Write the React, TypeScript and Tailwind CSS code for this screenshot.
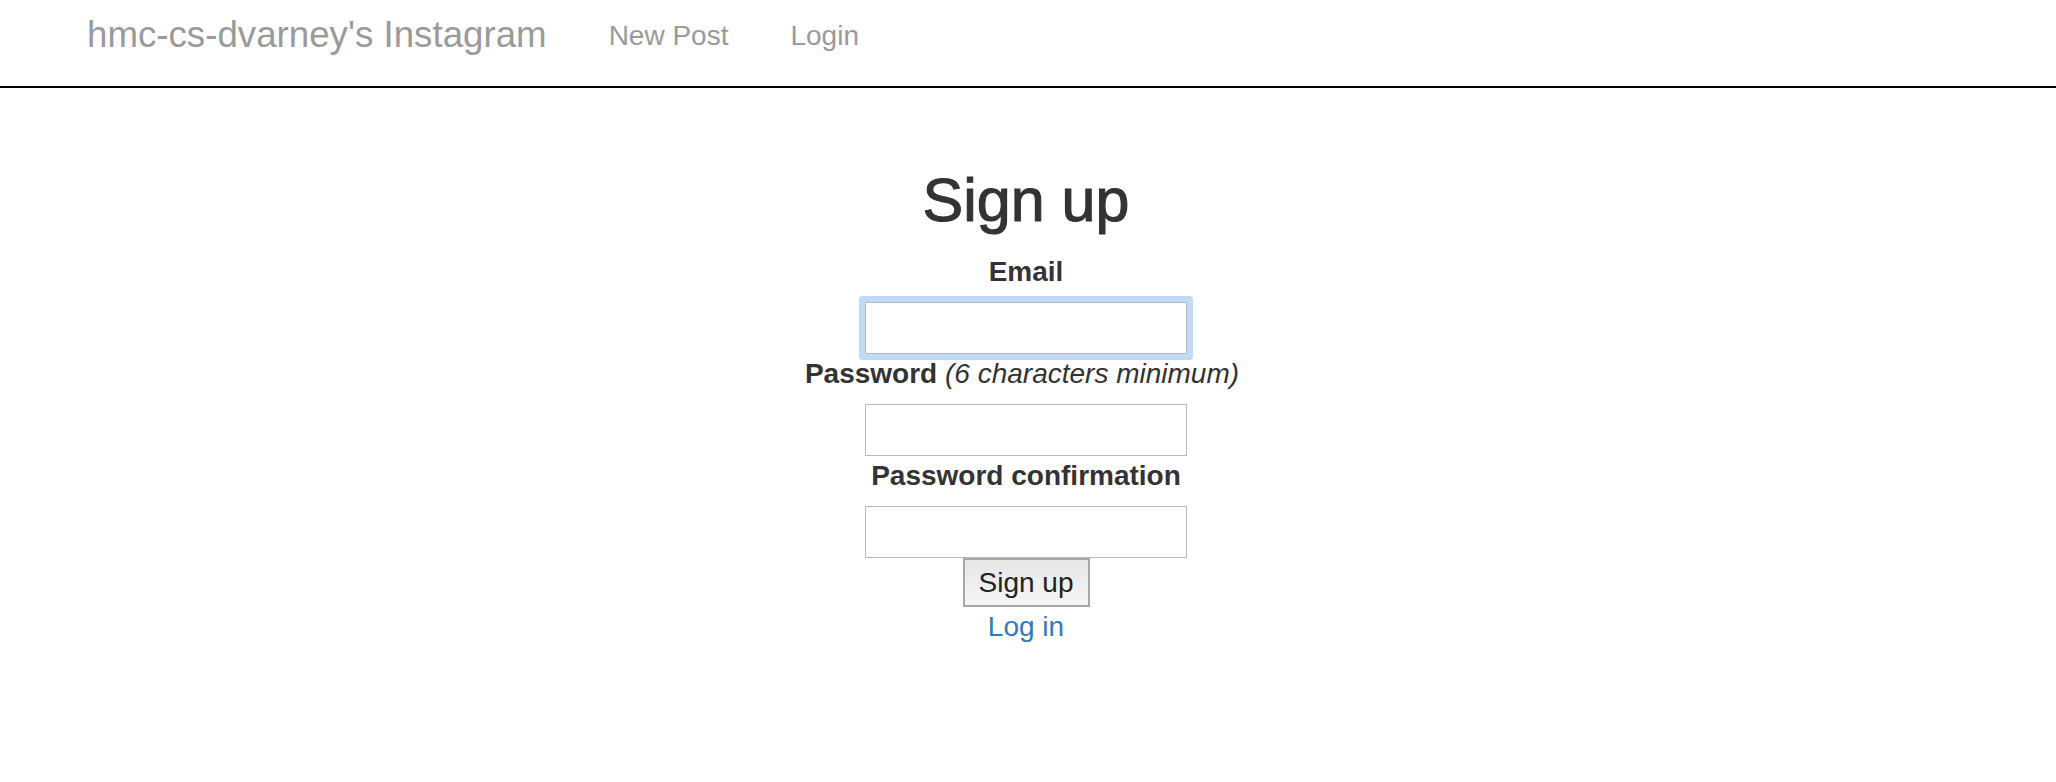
import React from "react";

export default function App() {
  return (
    <div className="min-h-screen w-full bg-white font-['Liberation_Sans',Arial,sans-serif]">
      <nav className="flex h-[88px] items-start border-b-2 border-black">
        <a className="ml-[87px] mt-[15px] whitespace-nowrap text-[36.7px] leading-[40px] text-[#9a9a9a]">
          hmc-cs-dvarney's Instagram
        </a>
        <a className="ml-[62px] mt-[16px] whitespace-nowrap text-[28px] leading-[40px] text-[#9a9a9a]">
          New Post
        </a>
        <a className="ml-[62px] mt-[16px] whitespace-nowrap text-[28px] leading-[40px] text-[#9a9a9a]">
          Login
        </a>
      </nav>
      <main className="flex flex-col items-center pr-[4px] text-[#333]">
        <h2 className="mt-[79px] text-[61px] font-normal leading-[66px] [-webkit-text-stroke:1.1px_#333]">
          Sign up
        </h2>
        <form className="mt-[19px] flex flex-col items-center">
          <label className="text-[28px] font-bold leading-[40px]">Email</label>
          <input
            type="email"
            className="mt-[10px] h-[52px] w-[322px] rounded-[1px] border border-[#b9b9b9] bg-white shadow-[0_0_0_6px_#c1dbf7] outline-none"
          />
          <label className="text-[28px] leading-[40px]">
            <span className="pr-[8px]">
              <span className="font-bold">Password</span>{" "}
              <em className="italic font-normal">(6 characters minimum)</em>
            </span>
          </label>
          <input
            type="password"
            className="mt-[10px] h-[52px] w-[322px] border border-[#b9b9b9] bg-white outline-none"
          />
          <label className="text-[28px] font-bold leading-[40px]">Password confirmation</label>
          <input
            type="password"
            className="mt-[10px] h-[52px] w-[322px] border border-[#b9b9b9] bg-white outline-none"
          />
          <button
            type="button"
            className="flex h-[49px] w-[127px] items-center justify-center border-2 border-[#a8a8a8] bg-gradient-to-b from-[#e6e6e6] to-[#f6f6f6] text-[28px] text-[#222]"
          >
            Sign up
          </button>
          <a className="text-[28px] leading-[40px] text-[#337ab7]">Log in</a>
        </form>
      </main>
    </div>
  );
}
